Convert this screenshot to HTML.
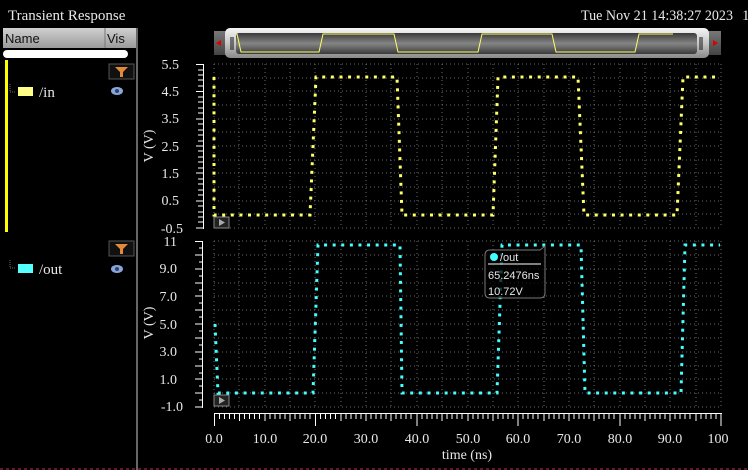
<!DOCTYPE html>
<html><head><meta charset="utf-8"><style>
html,body{margin:0;padding:0;background:#000;width:748px;height:470px;overflow:hidden}
svg{display:block}
text{font-family:"Liberation Serif",serif;fill:#e8e8e8}
</style></head><body>
<svg width="748" height="470" viewBox="0 0 748 470" xmlns="http://www.w3.org/2000/svg">
<defs>
<linearGradient id="hdr" x1="0" y1="0" x2="0" y2="1"><stop offset="0" stop-color="#d0d0d0"/><stop offset="1" stop-color="#9a9a9a"/></linearGradient>
<linearGradient id="sv" x1="0" y1="0" x2="0" y2="1"><stop offset="0" stop-color="#f4f4f4"/><stop offset="0.5" stop-color="#c8c8c8"/><stop offset="1" stop-color="#8a8a8a"/></linearGradient>
<linearGradient id="sd" x1="0" y1="0" x2="0" y2="1"><stop offset="0" stop-color="#3a3a3a"/><stop offset="0.5" stop-color="#858585"/><stop offset="1" stop-color="#3a3a3a"/></linearGradient>
<linearGradient id="bt" x1="0" y1="0" x2="0" y2="1"><stop offset="0" stop-color="#777"/><stop offset="1" stop-color="#444"/></linearGradient>
</defs>
<text x="8" y="20" font-size="15">Transient Response</text>
<text x="581" y="20" font-size="15" textLength="152" lengthAdjust="spacingAndGlyphs">Tue Nov 21 14:38:27 2023</text>
<text x="742" y="20" font-size="15">1</text>
<!-- left panel -->
<rect x="3" y="28" width="134" height="20" fill="url(#hdr)"/>
<line x1="105" y1="28" x2="105" y2="48" stroke="#777"/>
<text x="5" y="43" font-size="13" style="fill:#111;font-family:'Liberation Sans',sans-serif">Name</text>
<text x="107" y="43" font-size="13" style="fill:#111;font-family:'Liberation Sans',sans-serif">Vis</text>
<rect x="3" y="50" width="125" height="8" rx="4" fill="#fff"/>
<rect x="136" y="28" width="2" height="442" fill="#666"/>
<rect x="5" y="60" width="3" height="172" fill="#ffff00"/>
<rect x="109" y="64" width="25" height="15" fill="#111" stroke="#555"/>
<path d="M115,67 L128,67 L123,72 L123,77 L120,77 L120,72 Z" fill="#e08a3a"/>
<path d="M10,84 V92 H16" stroke="#666" stroke-dasharray="1 1" fill="none"/>
<rect x="18" y="87" width="15" height="9" fill="#ffff88"/>
<text x="39" y="97" font-size="15">/in</text>
<ellipse cx="117" cy="91" rx="6" ry="4" fill="#8aa6d6"/><circle cx="117" cy="91" r="2" fill="#304070"/>
<rect x="109" y="241" width="25" height="15" fill="#111" stroke="#555"/>
<path d="M115,244 L128,244 L123,249 L123,254 L120,254 L120,249 Z" fill="#e08a3a"/>
<path d="M10,260 V268 H16" stroke="#666" stroke-dasharray="1 1" fill="none"/>
<rect x="18" y="264" width="15" height="9" fill="#55ffff"/>
<text x="39" y="274" font-size="15">/out</text>
<ellipse cx="117" cy="269" rx="6" ry="4" fill="#8aa6d6"/><circle cx="117" cy="269" r="2" fill="#304070"/>
<line x1="0" y1="469" x2="748" y2="469" stroke="#c03050" stroke-dasharray="3 3"/>
<!-- scrollbar -->
<rect x="214" y="31" width="12" height="24" fill="url(#bt)"/>
<path d="M216,43 L221,40 L221,46 Z" fill="#d00"/>
<rect x="708" y="31" width="13" height="24" fill="url(#bt)"/>
<path d="M718,43 L713,40 L713,46 Z" fill="#d00"/>
<rect x="225" y="28" width="484" height="30" rx="5" fill="url(#sv)"/>
<rect x="236" y="33" width="461" height="21" rx="3" fill="url(#sd)"/>
<line x1="231" y1="37" x2="231" y2="50" stroke="#111"/><line x1="233" y1="37" x2="233" y2="50" stroke="#111"/>
<line x1="700" y1="37" x2="700" y2="50" stroke="#111"/><line x1="702" y1="37" x2="702" y2="50" stroke="#111"/>
<path d="M237,34 L241,52 L319,52 L323,34 L394,34 L398,52 L478,52 L482,34 L552,34 L556,52 L635,52 L639,34 L673,34" fill="none" stroke="#ffff66" stroke-width="1"/>
<!-- grids -->
<g stroke="#6a6a6a" stroke-width="1" stroke-dasharray="1 3" fill="none">
<path d="M214,64H722M214,78H722M214,91H722M214,105H722M214,119H722M214,132H722M214,146H722M214,160H722M214,173H722M214,187H722M214,201H722M214,214H722M214,228H722"/>
<path d="M214,241H722M214,255H722M214,269H722M214,283H722M214,296H722M214,310H722M214,324H722M214,338H722M214,352H722M214,366H722M214,379H722M214,393H722M214,407H722"/>
<path d="M214,64V228M239,64V228M265,64V228M290,64V228M315,64V228M341,64V228M366,64V228M391,64V228M417,64V228M442,64V228M468,64V228M493,64V228M518,64V228M544,64V228M569,64V228M594,64V228M620,64V228M645,64V228M670,64V228M696,64V228M721,64V228"/>
<path d="M214,241V407M239,241V407M265,241V407M290,241V407M315,241V407M341,241V407M366,241V407M391,241V407M417,241V407M442,241V407M468,241V407M493,241V407M518,241V407M544,241V407M569,241V407M594,241V407M620,241V407M645,241V407M670,241V407M696,241V407M721,241V407"/>
</g>
<!-- y axes -->
<g stroke="#fff" stroke-width="1">
<line x1="203.5" y1="64" x2="203.5" y2="229"/>
<path d="M196,64.5H204M198,70H204M198,75H204M198,80H204M198,86H204M196,91.5H204M198,97H204M198,102H204M198,108H204M198,113H204M196,119H204M198,124H204M198,130H204M198,135H204M198,141H204M196,146H204M198,151H204M198,157H204M198,162H204M198,168H204M196,173H204M198,179H204M198,184H204M198,190H204M198,195H204M196,201H204M198,206H204M198,212H204M198,217H204M198,222H204M196,228H204"/>
<line x1="202.5" y1="241" x2="202.5" y2="408"/>
<path d="M195,241.5H203M199,248H203M195,255H203M199,262H203M195,269H203M199,276H203M195,283H203M199,290H203M195,296H203M199,303H203M195,310H203M199,317H203M195,324H203M199,331H203M195,338H203M199,345H203M195,352H203M199,359H203M195,366H203M199,373H203M195,379H203M199,386H203M195,393H203M199,400H203M195,407H203"/>
<line x1="214" y1="413.5" x2="722" y2="413.5"/>
<path d="M214.5,413V426M239.5,413V421M265,413V421M290,413V421M315.5,413V426M341,413V421M366,413V421M391,413V421M417,413V426M442,413V421M468,413V421M493,413V421M518,413V426M544,413V421M569,413V421M594,413V421M620,413V426M645,413V421M670,413V421M696,413V421M721,413V426"/>
<path d="M219.5,413V419M224.5,413V419M229.5,413V419M234.5,413V419M244.5,413V419M249.5,413V419M254.5,413V419M259.5,413V419M270,413V419M275,413V419M280,413V419M285,413V419M295,413V419M300,413V419M305,413V419M310,413V419M320.5,413V419M325.5,413V419M330.5,413V419M335.5,413V419M346,413V419M351,413V419M356,413V419M361,413V419M371,413V419M376,413V419M381,413V419M386,413V419M396,413V419M401,413V419M406,413V419M411,413V419M422,413V419M427,413V419M432,413V419M437,413V419M447,413V419M452,413V419M457,413V419M462,413V419M473,413V419M478,413V419M483,413V419M488,413V419M498,413V419M503,413V419M508,413V419M513,413V419M523,413V419M528,413V419M533,413V419M538,413V419M549,413V419M554,413V419M559,413V419M564,413V419M574,413V419M579,413V419M584,413V419M589,413V419M599,413V419M604,413V419M609,413V419M614,413V419M625,413V419M630,413V419M635,413V419M640,413V419M650,413V419M655,413V419M660,413V419M665,413V419M675,413V419M680,413V419M685,413V419M690,413V419M701,413V419M706,413V419M711,413V419M716,413V419"/>
</g>
<g font-size="14" text-anchor="end">
<text x="179" y="69">5.5</text><text x="179" y="96">4.5</text><text x="179" y="123">3.5</text><text x="179" y="151">2.5</text><text x="179" y="178">1.5</text><text x="179" y="205">0.5</text><text x="183" y="233">-0.5</text>
<text x="177" y="246">11</text><text x="177" y="273">9.0</text><text x="177" y="301">7.0</text><text x="177" y="329">5.0</text><text x="177" y="356">3.0</text><text x="177" y="384">1.0</text><text x="183" y="411">-1.0</text>
</g>
<g font-size="14" text-anchor="middle">
<text x="214" y="443">0.0</text><text x="265" y="443">10.0</text><text x="315" y="443">20.0</text><text x="366" y="443">30.0</text><text x="417" y="443">40.0</text><text x="468" y="443">50.0</text><text x="518" y="443">60.0</text><text x="569" y="443">70.0</text><text x="620" y="443">80.0</text><text x="670" y="443">90.0</text><text x="718" y="443">100</text>
<text x="467" y="459">time (ns)</text>
<text transform="translate(153,146) rotate(-90)" font-size="14">V (V)</text>
<text transform="translate(153,323) rotate(-90)" font-size="14">V (V)</text>
</g>
<!-- markers -->
<rect x="214" y="217" width="15" height="11" fill="#222" stroke="#888"/><path d="M219,219 L225,222.5 L219,226 Z" fill="#aaa"/>
<rect x="214" y="395" width="15" height="11" fill="#222" stroke="#888"/><path d="M219,397 L225,400.5 L219,404 Z" fill="#aaa"/>
<!-- waveforms -->
<path d="M214,77 L214,215 L310,215 L316,77 L397,77 L402,215 L493,215 L498,77 L578,77 L584,215 L677,215 L683,77 L720,77" fill="none" stroke="#ffff66" stroke-width="3" stroke-dasharray="3 5.6"/>
<path d="M215,324 L218,393 L313,393 L318,245 L400,245 L402,393 L497,393 L502,245 L581,245 L585,393 L681,393 L685,245 L720,245" fill="none" stroke="#44ffff" stroke-width="3" stroke-dasharray="3 5.6"/>
<!-- tooltip -->
<path d="M490,250 H540 L545,246 L545,258 V293 Q545,298 540,298 H490 Q485,298 485,293 V255 Q485,250 490,250 Z" fill="rgba(0,0,0,0.75)" stroke="#777"/>
<circle cx="494" cy="257" r="4" fill="#44ffff"/>
<line x1="488" y1="264" x2="541" y2="264" stroke="#fff"/>
<g font-size="11">
<text x="500" y="261" style="font-family:'Liberation Sans',sans-serif">/out</text>
<text x="488" y="279" style="font-family:'Liberation Sans',sans-serif">65.2476ns</text>
<text x="488" y="295" style="font-family:'Liberation Sans',sans-serif">10.72V</text>
</g>
</svg>
</body></html>
